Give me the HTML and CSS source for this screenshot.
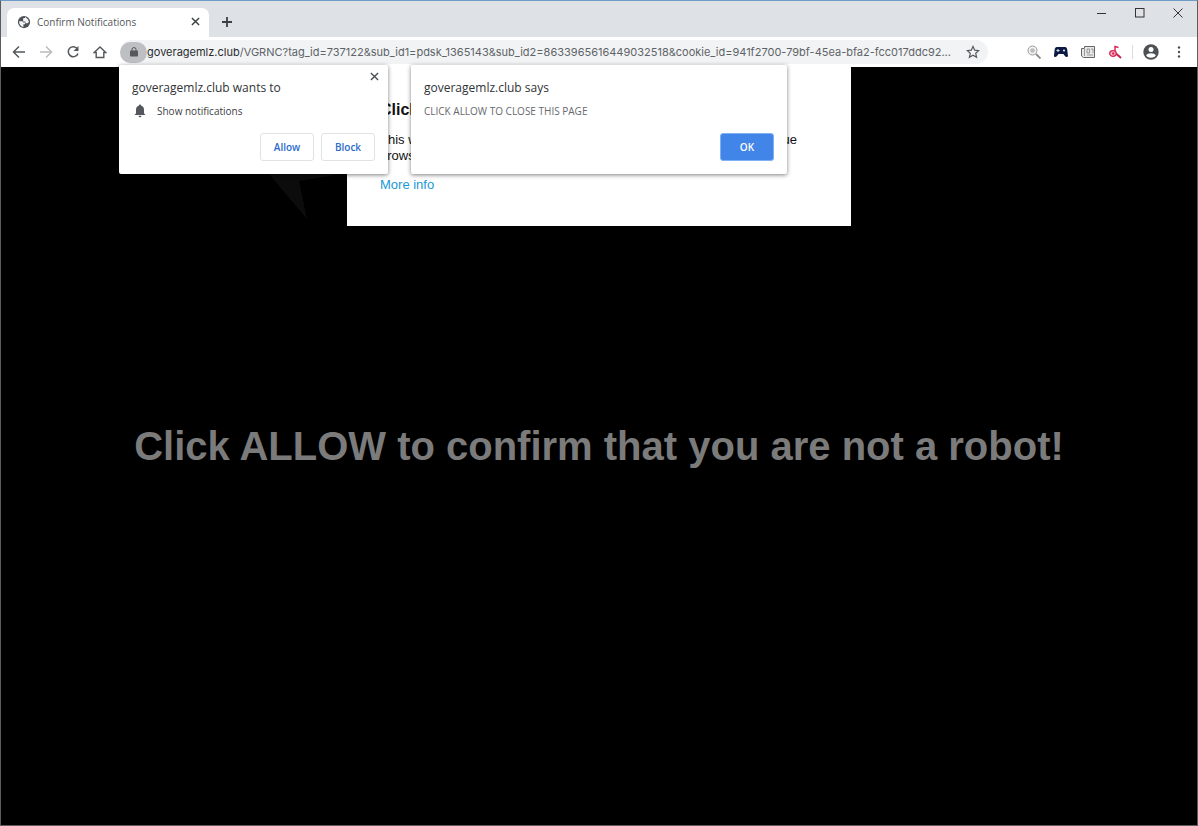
FILE: index.html
```html
<!DOCTYPE html>
<html lang="en">
<head>
    <meta charset="UTF-8">
    <meta name="viewport" content="width=device-width, initial-scale=1.0">
    <title>Confirm Notifications</title>
    <link rel="stylesheet" href="styles.css">
</head>
<body>

    <div class="window">
        <header class="tab-strip">
            <div class="tab">
                <svg class="tab-icon" viewBox="0 0 24 24" width="14" height="14"><circle cx="12" cy="12" r="10.500" fill="#4d5156"/><path d="M3.500 10.500h5.500l2 2.500h3v3h-3v4.500c-4-.5-7.500-4-7.500-10zM11 5h3V3l5 4.500 1.500 4.500-2.500 2h-3l-1-3h-3.500V8z" fill="#f4f5f6"/></svg>
                <span class="tab-title">Confirm Notifications</span>
                <button type="button" class="icon-button" aria-label="Close tab">
                    <svg viewBox="0 0 10 10" width="9" height="9"><path d="M1 1l8 8M9 1l-8 8" stroke="#3c4043" stroke-width="1.6"/></svg>
                </button>
            </div>
            <button type="button" class="icon-button new-tab" aria-label="New tab">
                <svg viewBox="0 0 12 12" width="12" height="12"><path d="M6 1v10M1 6h10" stroke="#3c4043" stroke-width="1.8"/></svg>
            </button>
            <div class="window-buttons">
                <button type="button" class="icon-button" aria-label="Minimize">
                    <svg viewBox="0 0 10 10" width="10" height="10"><path d="M0 5.5h9" stroke="#333" stroke-width="1"/></svg>
                </button>
                <button type="button" class="icon-button" aria-label="Maximize">
                    <svg viewBox="0 0 10 10" width="10" height="10"><rect x=".5" y=".5" width="8.5" height="8.5" fill="none" stroke="#333"/></svg>
                </button>
                <button type="button" class="icon-button" aria-label="Close">
                    <svg viewBox="0 0 10 10" width="10" height="10"><path d="M.5 .5l9 9M9.500 .5l-9 9" stroke="#333" stroke-width="1"/></svg>
                </button>
            </div>
        </header>

        <nav class="toolbar">
            <div class="nav-buttons">
                <button type="button" class="icon-button" aria-label="Back">
                    <svg viewBox="0 0 14 14" width="14" height="14"><path d="M13 7H2M7 1.500L1.500 7 7 12.500" fill="none" stroke="#54585c" stroke-width="1.5"/></svg>
                </button>
                <button type="button" class="icon-button" aria-label="Forward">
                    <svg viewBox="0 0 14 14" width="14" height="14"><path d="M1 7h11M7 1.500L12.500 7 7 12.500" fill="none" stroke="#babcbe" stroke-width="1.5"/></svg>
                </button>
                <button type="button" class="icon-button" aria-label="Reload">
                    <svg viewBox="0 0 14 14" width="14" height="14"><path d="M11.300 3.700A5 5 0 1 0 12 8.400" fill="none" stroke="#54585c" stroke-width="1.500"/><path d="M12.500 1v5h-5z" fill="#54585c"/></svg>
                </button>
                <button type="button" class="icon-button" aria-label="Home">
                    <svg viewBox="0 0 14 14" width="14" height="14"><path d="M1.200 7.500L7 2l5.800 5.500h-2v5H3.200v-5z" fill="none" stroke="#54585c" stroke-width="1.400"/></svg>
                </button>
            </div>

            <div class="address-bar">
                <button type="button" class="site-info" aria-label="Site information">
                    <svg viewBox="0 0 8 10" width="8" height="10"><path d="M2 4V2.500a2 2 0 0 1 4 0V4" fill="none" stroke="#55585c" stroke-width="1"/><rect y="3.500" width="8" height="6" rx=".8" fill="#55585c"/></svg>
                </button>
                <label for="address" class="domain">goveragemlz.club</label>
                <input type="text" id="address" class="address" value="/VGRNC?tag_id=737122&amp;sub_id1=pdsk_1365143&amp;sub_id2=8633965616449032518&amp;cookie_id=941f2700-79bf-45ea-bfa2-fcc017ddc92...">
                <button type="button" class="icon-button" aria-label="Bookmark this page">
                    <svg viewBox="0 0 14 14" width="14" height="14"><path d="M7 1.500l1.700 3.700 4 .4-3 2.700.9 4L7 10.200l-3.600 2.100.9-4-3-2.700 4-.4z" fill="none" stroke="#54585c" stroke-width="1.200"/></svg>
                </button>
            </div>

            <div class="extensions">
                <button type="button" class="icon-button" aria-label="Search extension">
                    <svg viewBox="0 0 14 14" width="14" height="14"><circle cx="5.500" cy="5.500" r="4.500" fill="#f2f2f2" stroke="#999" stroke-width="1"/><circle cx="5.500" cy="5.500" r="2.300" fill="#bbb"/><path d="M9 9l4.500 4.500" stroke="#888" stroke-width="1.800"/></svg>
                </button>
                <button type="button" class="icon-button" aria-label="Games extension">
                    <svg viewBox="0 0 14 14" width="14" height="14"><path d="M3 2h8c1.500 0 2 1 2.300 3l.6 5.500c.2 2-2 2-3 .5L9.500 9h-5L3 11c-1 1.500-3.200 1.500-3-.5L.6 5C.9 3 1.500 2 3 2z" fill="#0a1a45"/><path d="M2.500 5.500h3M4 4v3" stroke="#dce3ef"/><circle cx="10" cy="5.500" r="1.100" fill="#dce3ef"/></svg>
                </button>
                <button type="button" class="icon-button" aria-label="News extension">
                    <svg viewBox="0 0 14 14" width="14" height="14"><path d="M3.500 1.500h10v11h-11L.5 11V3.500h3z" fill="#e8e8e8" stroke="#666"/><path d="M3.500 3v8M6 4h2.500v4H6zM10 4h2v4M6 10h6" fill="none" stroke="#999"/></svg>
                </button>
                <button type="button" class="icon-button" aria-label="Music extension">
                    <svg viewBox="0 0 14 14" width="14" height="14"><path d="M7 8V1.500l3.500 1" fill="none" stroke="#d92b59" stroke-width="1.500"/><path d="M8 8.500l5 4.500" stroke="#c0284f" stroke-width="2"/><ellipse cx="5" cy="8.500" rx="3.300" ry="2.800" fill="#f7b9ca" stroke="#d92b59" stroke-width="1.300"/><circle cx="5.200" cy="8.500" r="1.200" fill="#d92b59"/></svg>
                </button>
                <span class="divider"></span>
                <button type="button" class="icon-button" aria-label="Profile">
                    <svg viewBox="0 0 16 16" width="16" height="16"><circle cx="8" cy="8" r="7.700" fill="#4d5155"/><circle cx="8" cy="5.500" r="2.500" fill="#fff"/><path d="M3.200 11.500c1-3 8.600-3 9.600 0-2 3-7.600 3-9.600 0z" fill="#fff"/></svg>
                </button>
                <button type="button" class="icon-button" aria-label="Menu">
                    <svg viewBox="0 0 14 14" width="14" height="14"><circle cx="7" cy="2.500" r="1.200" fill="#4d5155"/><circle cx="7" cy="7" r="1.200" fill="#4d5155"/><circle cx="7" cy="11.500" r="1.200" fill="#4d5155"/></svg>
                </button>
            </div>
        </nav>

        <main class="page">
            <svg class="arrow" viewBox="0 0 90 60" width="90" height="60"><path d="M0 0h90v5L36 14l8 38z" fill="#0c0c0c"/></svg>
            <h1 class="robot-text">Click ALLOW to confirm that you are not a robot!</h1>

            <section class="info-card">
                <h2>Click « Allow » to close this window</h2>
                <p>This window can be closed by pressing « Allow ». If you wish to continue browsing this website just click « More info »</p>
                <a href="#">More info</a>
            </section>
        </main>

        <div class="dialog permission" role="dialog" aria-labelledby="permission-title">
            <button type="button" class="icon-button dialog-close" aria-label="Dismiss">
                <svg viewBox="0 0 10 10" width="9" height="9"><path d="M1 1l8 8M9 1l-8 8" stroke="#4a4d51" stroke-width="1.500"/></svg>
            </button>
            <h3 id="permission-title">goveragemlz.club wants to</h3>
            <p class="permission-item">
                <svg viewBox="0 0 12 14" width="12" height="14"><path d="M6 .5c.7 0 1 .5 1 1 2 .6 3 2.200 3 4.200v3.500L11.500 11H.5L2 9.200V5.700c0-2 1-3.600 3-4.200 0-.5.300-1 1-1zM4.600 11.800h2.800c0 2-2.800 2-2.800 0z" fill="#54585d"/></svg>
                <span>Show notifications</span>
            </p>
            <div class="dialog-buttons">
                <button type="button" class="button">Allow</button>
                <button type="button" class="button">Block</button>
            </div>
        </div>

        <div class="dialog alert" role="alertdialog" aria-labelledby="alert-title">
            <h3 id="alert-title">goveragemlz.club says</h3>
            <p class="alert-text">CLICK ALLOW TO CLOSE THIS PAGE</p>
            <div class="dialog-buttons">
                <button type="button" class="button primary">OK</button>
            </div>
        </div>
    </div>

</body>
</html>
```
FILE: styles.css
```css
* {
    box-sizing: border-box;
}
body {
    margin: 0;
    background-color: #000;
    font-family: "Open Sans", "Noto Sans", sans-serif;
    font-size: 10px;
    color: #3c4043;
}
h1, h2, h3, p {
    margin: 0;
}
svg {
    display: block;
    flex: none;
}
.window {
    position: relative;
    display: flex;
    flex-direction: column;
    min-height: 100vh;
    border: 1px solid #5c5c5c;
    border-top-color: #6f9cc5;
}
.icon-button {
    display: flex;
    align-items: center;
    justify-content: center;
    padding: 0;
    border: none;
    background: none;
    cursor: pointer;
}

/* Tabs */
.tab-strip {
    display: flex;
    align-items: flex-end;
    height: 36px;
    padding-left: 6px;
    background-color: #dee1e6;
}
.tab {
    display: flex;
    align-items: center;
    width: 202px;
    height: 29px;
    padding: 0 9px 2px 10px;
    background-color: #fff;
    border-radius: 7px 7px 0 0;
}
.tab-title {
    flex: 1;
    margin-left: 6px;
    color: #55585c;
}
.new-tab {
    width: 36px;
    height: 29px;
    padding-bottom: 2px;
}
.window-buttons {
    display: flex;
    align-self: flex-start;
    gap: 28px;
    height: 24px;
    margin-left: auto;
    padding-right: 14px;
}

/* Toolbar */
.toolbar {
    display: flex;
    align-items: center;
    height: 30px;
    padding: 0 11px;
    background-color: #fff;
}
.nav-buttons {
    display: flex;
    gap: 13px;
    margin-right: 13px;
}
.address-bar {
    display: flex;
    flex: 1;
    align-items: center;
    height: 24px;
    padding-right: 8px;
    background-color: #f1f3f4;
    border-radius: 12px;
    font-family: Inter, "Open Sans", sans-serif;
    font-size: 11px;
}
.site-info {
    display: flex;
    align-items: center;
    justify-content: center;
    width: 27px;
    height: 21px;
    padding: 0;
    border: none;
    border-radius: 11px;
    background-color: #bdbfc2;
}
.domain {
    color: #2a2c2f;
}
.address {
    flex: 1;
    min-width: 0;
    padding: 0;
    border: none;
    outline: none;
    background: none;
    font: inherit;
    color: #5f6368;
}
.extensions {
    display: flex;
    align-items: center;
    gap: 13px;
    margin-left: 39px;
}
.divider {
    width: 1px;
    height: 14px;
    margin: 0 -3px;
    background-color: #dadce0;
}

/* Page content */
.page {
    position: relative;
    display: flex;
    flex: 1;
    align-items: center;
    justify-content: center;
    background-color: #000;
    font-family: "Liberation Sans", Arial, sans-serif;
}
.robot-text {
    font-size: 40px;
    line-height: 48px;
    text-align: center;
    color: #7b7b7b;
}
.arrow {
    position: absolute;
    top: 100px;
    left: 262px;
}
.info-card {
    position: absolute;
    top: 0;
    left: 50%;
    width: 504px;
    height: 159px;
    padding: 33px;
    background-color: #fff;
    color: #111;
    font-size: 13px;
    line-height: 16px;
    transform: translateX(-50%);
}
.info-card h2 {
    margin-bottom: 12px;
    font-size: 16px;
    line-height: 20px;
}
.info-card p {
    margin-bottom: 13px;
}
.info-card a {
    color: #1a98d5;
    text-decoration: none;
}

/* Browser dialogs */
.dialog {
    position: absolute;
    top: 64px;
    height: 109px;
    padding: 13px;
    background-color: #fff;
    border-radius: 2px;
    box-shadow: 0 1px 4px rgba(0, 0, 0, 0.5);
}
.dialog h3 {
    margin-bottom: 5px;
    font-size: 12px;
    font-weight: normal;
    line-height: 20px;
    color: #303336;
}
.dialog p {
    line-height: 16px;
}
.permission {
    left: 118px;
    width: 269px;
}
.alert {
    left: 410px;
    width: 376px;
}
.alert-text {
    color: #66696d;
}
.permission-item {
    display: flex;
    align-items: center;
    gap: 11px;
    padding-left: 2px;
}
.dialog-close {
    position: absolute;
    top: 7px;
    right: 9px;
}
.dialog-buttons {
    display: flex;
    justify-content: flex-end;
    gap: 7px;
    margin-top: 14px;
}
.button {
    width: 54px;
    height: 28px;
    padding: 0;
    border: 1px solid #e0e2e6;
    border-radius: 3px;
    background-color: #fff;
    font-family: inherit;
    font-size: 10px;
    font-weight: 600;
    color: #2a6cc9;
    cursor: pointer;
}
.primary {
    border-color: #7fb0f3;
    background-color: #4285e8;
    color: #fff;
}
```
